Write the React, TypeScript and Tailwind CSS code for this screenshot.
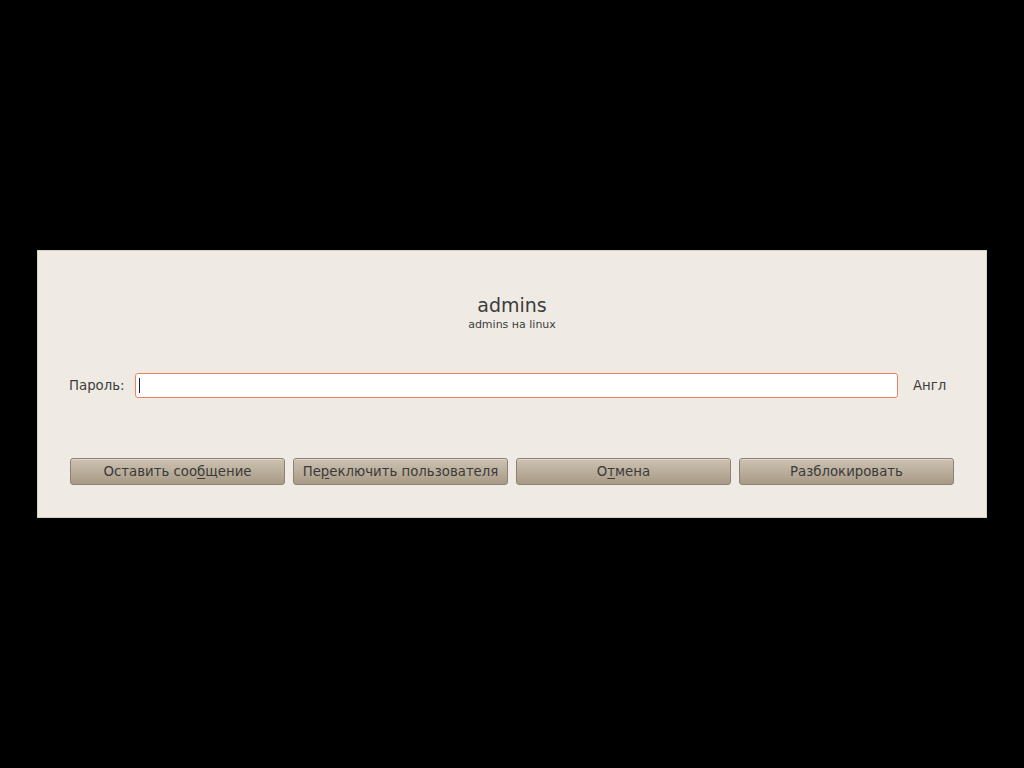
import React from "react";

type BtnProps = { pre: string; key_?: string; post?: string };

function DlgButton({ pre, key_, post }: BtnProps) {
  return (
    <button className="flex-1 h-[27px] rounded-[3px] border border-[#8e8370] bg-gradient-to-b from-[#cdc2b1] to-[#a79b87] text-[13.3px] text-[#3a3a3a] shadow-[inset_0_1px_0_rgba(255,255,255,0.35)]">
      {pre}
      {key_ && <span className="underline underline-offset-2">{key_}</span>}
      {post}
    </button>
  );
}

function App() {
  return (
    <div
      className="w-[1024px] h-[768px] bg-black flex items-center justify-center"
      style={{ fontFamily: '"DejaVu Sans", sans-serif' }}
    >
      <div className="w-[950px] h-[268px] bg-[#efebe4] border border-[#d9d2c5] flex flex-col px-[32px] pt-[42px]">
        {/* user name */}
        <div className="flex flex-col items-center text-[#3c3c3c]">
          <p className="text-[19px] leading-[24px]">admins</p>
          <p className="text-[11px] leading-[14px] mt-[1px]">admins на linux</p>
        </div>

        {/* password row */}
        <div className="flex items-center mt-[41px] text-[13.3px] text-[#3c3c3c]">
          <span className="-ml-px w-[66px]">Пароль:</span>
          <div className="flex-1 h-[25px] bg-white border border-[#ec8166] rounded-[3px] flex items-center pl-[3px]">
            <div className="w-[1px] h-[15px] bg-[#222]" />
          </div>
          <span className="w-[56px] pl-[15px]">Англ</span>
        </div>

        {/* buttons */}
        <div className="flex gap-[8px] mt-[60px]">
          <DlgButton pre="Оставить соо" key_="б" post="щение" />
          <DlgButton pre="Пе" key_="р" post="еключить пользователя" />
          <DlgButton pre="О" key_="т" post="мена" />
          <DlgButton pre="Разблокировать" />
        </div>
      </div>
    </div>
  );
}

export default App;
